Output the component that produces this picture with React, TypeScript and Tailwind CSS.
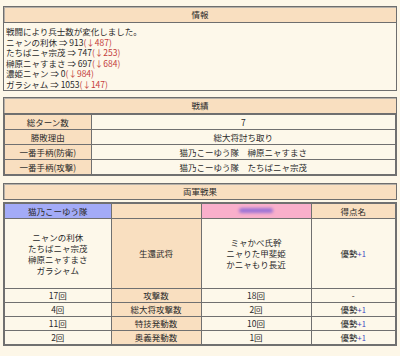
import React from 'react';

const cell = 'border border-[#707070] text-center align-middle p-0';
const peach = 'bg-[#f9dfc0]';
const cream = 'bg-[#fdf8ea]';

function SectionHeader({ title }: { title: string }) {
  return (
    <div className={`h-[17px] flex items-center justify-center border border-[#6e6e6e] shadow-[inset_1px_1px_0_#b5b0a8] ${peach}`}>
      {title}
    </div>
  );
}

function Loss({ name, now, diff }: { name: string; now: string; diff: string }) {
  return (
    <div>
      {name} ⇒ {now}
      <span className="text-[#c43c3c]">(↓{diff})</span>
    </div>
  );
}

function Plus() {
  return (
    <span>
      優勢<span className="text-[#3340c0] text-[7.5px]">+1</span>
    </span>
  );
}

const record = [
  ['総ターン数', '7'],
  ['勝敗理由', '総大将討ち取り'],
  ['一番手柄(防衛)', '猫乃こーゆう隊　榊原ニャすまさ'],
  ['一番手柄(攻撃)', '猫乃こーゆう隊　たちばニャ宗茂'],
];

const stats: [string, string, string, React.ReactNode][] = [
  ['17回', '攻撃数', '18回', '-'],
  ['4回', '総大将攻撃数', '2回', <Plus />],
  ['11回', '特技発動数', '10回', <Plus />],
  ['2回', '奥義発動数', '1回', <Plus />],
];

export default function App() {
  return (
    <div className="w-[400px] h-[356px] overflow-hidden bg-[#fdf7e8] px-[3px] pt-[6px] text-[8.5px] leading-[10.5px] text-[#2a2a2a] font-['Noto_Sans_CJK_JP','Liberation_Sans',sans-serif]">
      {/* 情報 */}
      <SectionHeader title="情報" />
      <div className={`h-[68px] border border-t-0 border-[#6e6e6e] px-[2px] pt-[3px] ${cream}`}>
        <div>戦闘により兵士数が変化しました。</div>
        <Loss name="ニャンの利休" now="913" diff="487" />
        <Loss name="たちばニャ宗茂" now="747" diff="253" />
        <Loss name="榊原ニャすまさ" now="697" diff="684" />
        <Loss name="濃姫ニャン" now="0" diff="984" />
        <Loss name="ガラシャム" now="1053" diff="147" />
      </div>

      {/* 戦績 */}
      <div className="mt-[6px]">
        <SectionHeader title="戦績" />
        <table className="w-full border-collapse border-2 border-t-0 border-[#707070]">
          <tbody>
            {record.map(([k, v]) => (
              <tr key={k} className="h-[15px]">
                <td className={`${cell} ${peach} w-[87px]`}>{k}</td>
                <td className={`${cell} ${cream}`}>{v}</td>
              </tr>
            ))}
          </tbody>
        </table>
      </div>

      {/* 両軍戦果 */}
      <div className="mt-[7px]">
        <SectionHeader title="両軍戦果" />
        <table className="mt-[2px] w-full border-collapse border-2 border-[#707070] table-fixed">
          <tbody>
            <tr className="h-[16px]">
              <td className={`${cell} w-[107px] bg-[#a3abf7]`}>猫乃こーゆう隊</td>
              <td className={`${cell} w-[90px] ${peach}`}></td>
              <td className={`${cell} w-[110px] bg-[#f9afcb]`}>
                <div className="mx-auto h-[5px] w-[34px] rounded-sm bg-[#9d74d6] blur-[1.5px]" />
              </td>
              <td className={`${cell} ${peach}`}>得点名</td>
            </tr>
            <tr className="h-[70px]">
              <td className={`${cell} ${cream} leading-[11px]`}>
                <div>ニャンの利休</div>
                <div>たちばニャ宗茂</div>
                <div>榊原ニャすまさ</div>
                <div>ガラシャム</div>
              </td>
              <td className={`${cell} ${peach}`}>生還武将</td>
              <td className={`${cell} ${cream} leading-[11px]`}>
                <div>ミャかべ氏幹</div>
                <div>ニャりた甲斐姫</div>
                <div>かニャもり長近</div>
              </td>
              <td className={`${cell} ${cream}`}>
                <Plus />
              </td>
            </tr>
            {stats.map(([a, label, b, score]) => (
              <tr key={label} className="h-[14px]">
                <td className={`${cell} ${cream}`}>{a}</td>
                <td className={`${cell} ${peach}`}>{label}</td>
                <td className={`${cell} ${cream}`}>{b}</td>
                <td className={`${cell} ${cream}`}>{score}</td>
              </tr>
            ))}
          </tbody>
        </table>
      </div>
    </div>
  );
}
